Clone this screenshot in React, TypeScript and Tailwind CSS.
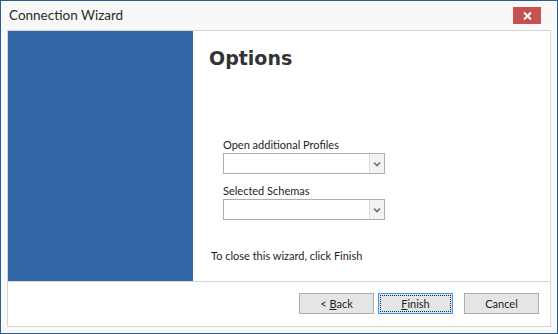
import React from 'react';

function Combo() {
  return (
    <div className="flex h-[21px] w-[162px] border border-[#abadb3] bg-white">
      <div className="flex-1" />
      <div className="flex w-[15px] items-center justify-center border-l border-[#d9d9d9] bg-[#f3f3f3]">
        <svg width="8" height="6" viewBox="0 0 8 6">
          <path d="M1 1.5 L4 4.5 L7 1.5" fill="none" stroke="#6d6d6d" strokeWidth="1.6" />
        </svg>
      </div>
    </div>
  );
}

function Btn({ children, focused }: { children: React.ReactNode; focused?: boolean }) {
  return (
    <button
      className={
        focused
          ? 'flex h-[21px] w-[75px] items-center justify-center border border-[#3399ff] bg-[#e5e5e5] p-[1px]'
          : 'flex h-[21px] w-[75px] items-center justify-center border border-[#adadad] bg-[#e5e5e5]'
      }
    >
      {focused ? (
        <span className="flex h-full w-full items-center justify-center border border-dotted border-[#222]">
          {children}
        </span>
      ) : (
        children
      )}
    </button>
  );
}

export default function App() {
  return (
    <div className="flex h-[334px] w-[558px] flex-col border border-[#2b5b9c] bg-[#f8f8f8] font-['Lato',sans-serif] text-[#1e1e1e]">
      {/* title bar */}
      <div className="flex h-[29px] items-start justify-between pl-[8px] pr-[16px]">
        <span className="mt-[4px] text-[13.5px] leading-[20px] text-[#2b2b2b]">Connection Wizard</span>
        <button className="mt-[6px] flex h-[17px] w-[28px] items-center justify-center bg-[#c75050]">
          <svg width="9" height="8" viewBox="0 0 9 8">
            <path d="M1 0.5 L8 7.5 M8 0.5 L1 7.5" stroke="#fff" strokeWidth="2" />
          </svg>
        </button>
      </div>

      {/* panel */}
      <div className="mx-[6px] flex h-[297px] flex-col border border-[#d5d5d5] bg-white">
        <div className="flex h-[250px]">
          <div className="w-[185px] bg-[#3467a7]" />
          <div className="flex-1 pl-[16px]">
            <h1 className="mt-[15px] font-['DejaVu_Sans',sans-serif] text-[19px] font-bold leading-[24px] text-[#333]">
              Options
            </h1>
            <div className="mt-[67px] pl-[14px] text-[11px] leading-[16px]">
              <div>Open additional Profiles</div>
              <Combo />
              <div className="mt-[9px]">Selected Schemas</div>
              <Combo />
            </div>
            <div className="mt-[28px] pl-[2px] text-[11px] leading-[16px]">To close this wizard, click Finish</div>
          </div>
        </div>
        <div className="h-px bg-[#d5d5d5]" />
        <div className="flex flex-1 items-start justify-end pr-[11px] pt-[11px] text-[11px] leading-[16px]">
          <Btn>
            <span>
              &lt; <span className="underline">B</span>ack
            </span>
          </Btn>
          <div className="ml-[4px]">
            <Btn focused>
              <span>
                <span className="underline">F</span>inish
              </span>
            </Btn>
          </div>
          <div className="ml-[11px]">
            <Btn>Cancel</Btn>
          </div>
        </div>
      </div>
    </div>
  );
}
